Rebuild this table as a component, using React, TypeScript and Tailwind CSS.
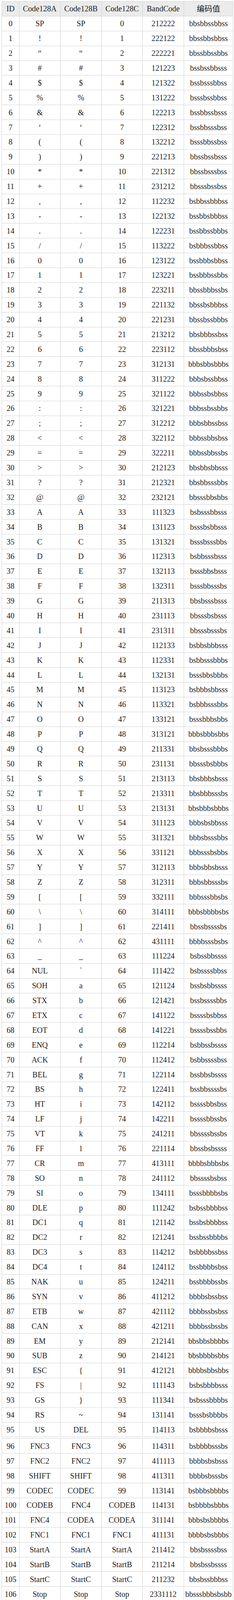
import React from "react";

// band widths for each Code 128 symbol (0..106)
const bandCodes = [
  "212222", "222122", "222221", "121223", "121322", "131222", "122213", "122312",
  "132212", "221213", "221312", "231212", "112232", "122132", "122231", "113222",
  "123122", "123221", "223211", "221132", "221231", "213212", "223112", "312131",
  "311222", "321122", "321221", "312212", "322112", "322211", "212123", "212321",
  "232121", "111323", "131123", "131321", "112313", "132113", "132311", "211313",
  "231113", "231311", "112133", "112331", "132131", "113123", "113321", "133121",
  "313121", "211331", "231131", "213113", "213311", "213131", "311123", "311321",
  "331121", "312113", "312311", "332111", "314111", "221411", "431111", "111224",
  "111422", "121124", "121421", "141122", "141221", "112214", "112412", "122114",
  "122411", "142112", "142211", "241211", "221114", "413111", "241112", "134111",
  "111242", "121142", "121241", "114212", "124112", "124211", "411212", "421112",
  "421211", "212141", "214121", "412121", "111143", "111341", "131141", "114113",
  "114311", "411113", "411311", "113141", "114131", "311141", "411131", "211412",
  "211214", "211232", "2331112",
];

const controls = [
  "NUL", "SOH", "STX", "ETX", "EOT", "ENQ", "ACK", "BEL", "BS", "HT", "LF",
  "VT", "FF", "CR", "SO", "SI", "DLE", "DC1", "DC2", "DC3", "DC4", "NAK",
  "SYN", "ETB", "CAN", "EM", "SUB", "ESC", "FS", "GS", "RS", "US",
];

const specials: Record<number, [string, string, string]> = {
  96: ["FNC3", "FNC3", "96"],
  97: ["FNC2", "FNC2", "97"],
  98: ["SHIFT", "SHIFT", "98"],
  99: ["CODEC", "CODEC", "99"],
  100: ["CODEB", "FNC4", "CODEB"],
  101: ["FNC4", "CODEA", "CODEA"],
  102: ["FNC1", "FNC1", "FNC1"],
  103: ["StartA", "StartA", "StartA"],
  104: ["StartB", "StartB", "StartB"],
  105: ["StartC", "StartC", "StartC"],
  106: ["Stop", "Stop", "Stop"],
};

const printable = (i: number) => {
  if (i === 0) return "SP";
  if (i === 2) return "\u201C";
  if (i === 7) return "\u2018";
  if (i === 64) return "`";
  if (i === 95) return "DEL";
  return String.fromCharCode(32 + i);
};

const toBars = (band: string) =>
  band
    .split("")
    .map((n, i) => (i % 2 === 0 ? "b" : "s").repeat(Number(n)))
    .join("");

interface Row {
  id: number;
  a: string;
  b: string;
  c: string;
  band: string;
  bars: string;
}

const rows: Row[] = bandCodes.map((band, id) => {
  const sp = specials[id];
  const a = sp ? sp[0] : id < 64 ? printable(id) : controls[id - 64];
  const b = sp ? sp[1] : printable(id);
  const c = sp ? sp[2] : String(id);
  return { id, a, b, c, band, bars: toBars(band) };
});

const cell = "border border-[#d2d2d2] text-center align-middle p-0 h-[37.9px]";

const Cols = () => (
  <colgroup>
    <col className="w-[45px]" />
    <col className="w-[105px]" />
    <col className="w-[106px]" />
    <col className="w-[105px]" />
    <col className="w-[106px]" />
    <col className="w-[126px]" />
  </colgroup>
);

const Body = ({ data }: { data: Row[] }) => (
  <tbody>
    {data.map((r) => (
      <tr key={r.id}>
        <td className={cell}>{r.id}</td>
        <td className={cell}>{r.a}</td>
        <td className={cell}>{r.b}</td>
        <td className={cell}>{r.c}</td>
        <td className={cell}>{r.band}</td>
        <td className={cell}>{r.bars}</td>
      </tr>
    ))}
  </tbody>
);

const tableClass =
  "w-[593px] table-fixed border-collapse border border-[#c4c4c4] bg-white";

export default function App() {
  return (
    <div className="w-[600px] bg-white pt-[3px] pl-[4px] pb-[3px] text-[20px] leading-[1.1] text-[#1c1c1c] font-['Liberation_Serif','Noto_Sans_CJK_SC',serif]">
      <table className={tableClass}>
        <Cols />
        <thead>
          <tr className="bg-[#ebebeb]">
            <th className={cell + " font-normal"}>ID</th>
            <th className={cell + " font-normal"}>Code128A</th>
            <th className={cell + " font-normal"}>Code128B</th>
            <th className={cell + " font-normal"}>Code128C</th>
            <th className={cell + " font-normal"}>BandCode</th>
            <th className={cell + " font-normal font-['Noto_Sans_CJK_SC',sans-serif]"}>
              编码值
            </th>
          </tr>
        </thead>
        <Body data={rows.slice(0, 96)} />
      </table>
      <table className={tableClass + " mt-[3px]"}>
        <Cols />
        <Body data={rows.slice(96)} />
      </table>
    </div>
  );
}
